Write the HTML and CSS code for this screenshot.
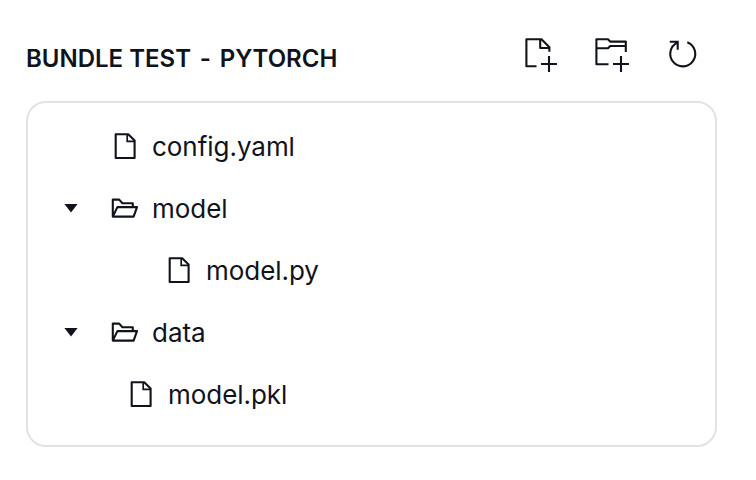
FILE: index.html
```html
<!DOCTYPE html>
<html lang="en">
<head>
<meta charset="utf-8">
<title>Bundle Test - PyTorch</title>
<link rel="stylesheet" href="styles.css">
</head>
<body>
<svg class="defs" aria-hidden="true">
  <symbol id="file" viewBox="0 0 28 28">
    <path stroke-linejoin="round" d="M4.7 1.2H17.2L23.6 7.4V25H4.7Z"/><path stroke-width="1.7" d="M16.2 1.5V8.3H23.3"/>
  </symbol>
  <symbol id="folder" viewBox="0 0 28 28">
    <path stroke-linejoin="round" d="M1.8 21.6V4.6H8.2L11.4 8.2H21.8V12.1M1.8 21.6L6.4 12.1H26L22.6 21.6H1.8Z"/>
  </symbol>
</svg>
<header class="header">
  <h1 class="title">BUNDLE TEST <span class="dash">-</span> PYTORCH</h1>
  <div class="actions">
    <button class="action" aria-label="New file"><svg viewBox="0 0 40 40"><path stroke-linejoin="round" d="M16.5 32.3H6.4V5.3H21.5L29.4 13.2V17.8M20.2 5.3V14H29.4"/><path d="M29 22V38M21 30H37"/></svg></button>
    <button class="action" aria-label="New folder"><svg viewBox="0 0 40 40"><path stroke-linejoin="round" d="M18.5 30.2H6.4V5.2H18L20.2 7.6H35.8V18M6.4 14.3H18L20.2 12H35.8"/><path d="M31 22V38M23 30H39"/></svg></button>
    <button class="action" aria-label="Refresh"><svg viewBox="0 0 40 40"><path d="M24.3 8.2A12.5 12.5 0 1 1 14.3 8.6M6.8 7.8H14.7V15.7"/></svg></button>
  </div>
</header>
<ul class="tree">
  <li class="row"><span class="caret"></span><svg class="icon"><use href="#file"/></svg>config.yaml</li>
  <li class="row"><span class="caret open"></span><svg class="icon"><use href="#folder"/></svg>model</li>
  <li class="row nested"><span class="caret"></span><svg class="icon"><use href="#file"/></svg>model.py</li>
  <li class="row"><span class="caret open"></span><svg class="icon"><use href="#folder"/></svg>data</li>
  <li class="row shallow"><span class="caret"></span><svg class="icon"><use href="#file"/></svg>model.pkl</li>
</ul>
</body>
</html>
```
FILE: styles.css
```css
* { box-sizing: border-box; }
body {
  margin: 0;
  padding: 34px 39px 0 26px;
  background: #fff;
  color: #11131c;
  font-family: Inter, sans-serif;
}
svg { fill: none; stroke: #11131c; stroke-width: 2.1; }
.defs { position: absolute; width: 0; height: 0; }
.header {
  display: flex;
  justify-content: space-between;
  height: 67px;
  padding-right: 14px;
}
.title { margin: 9px 0 0; font-size: 24px; line-height: 32px; font-weight: 600; white-space: nowrap; }
.dash { margin: 0 2.7px; }
.actions { display: flex; gap: 30px; }
.action { width: 40px; height: 40px; padding: 0; border: 0; background: none; }
.action:last-child { margin-left: 3px; }
.action svg { display: block; width: 40px; height: 40px; }
.tree {
  height: 346px;
  margin: 0;
  padding: 13px 0 0 36px;
  border: 2px solid #e0e3e8;
  border-radius: 20px;
  list-style: none;
}
.row { display: flex; align-items: center; height: 62px; font-size: 26px; line-height: 32px; letter-spacing: -0.04px; }
.nested { padding-left: 54px; }
.shallow { padding-left: 16px; }
.caret { width: 14px; height: 9px; margin: 0 33px 2px 0; }
.open { background: #11131c; clip-path: polygon(0 0, 100% 0, 50% 100%); }
.icon { width: 28px; height: 28px; margin-right: 13px; }
```
